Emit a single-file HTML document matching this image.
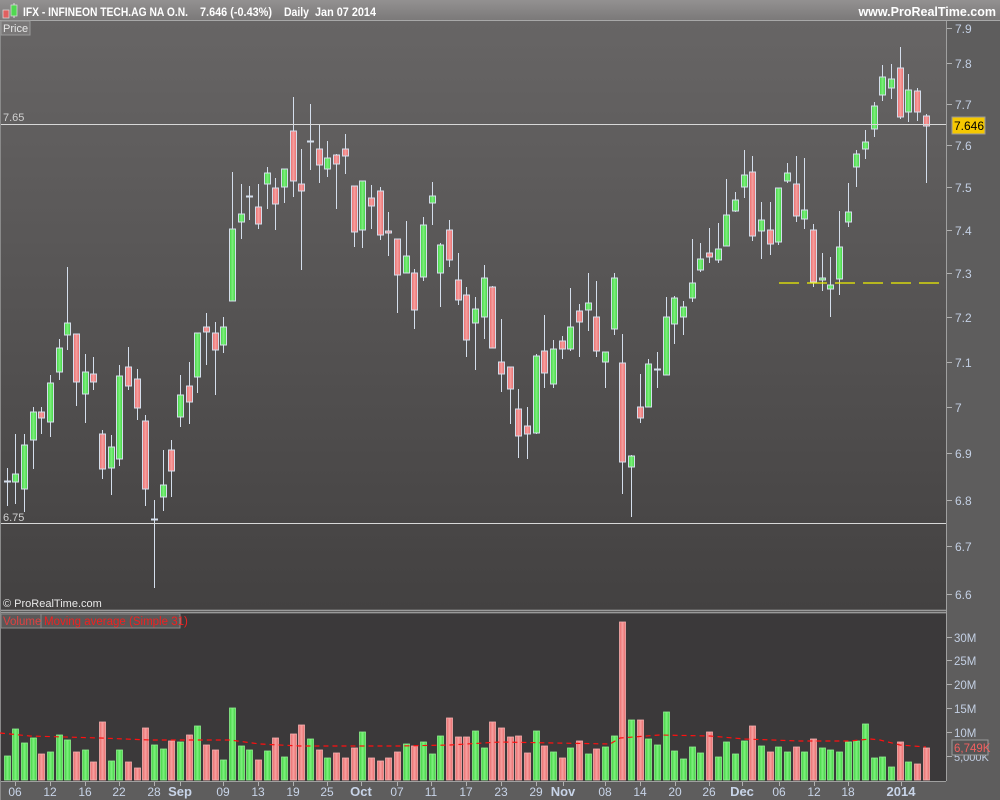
<!DOCTYPE html>
<html><head><meta charset="utf-8"><style>
html,body{margin:0;padding:0;width:1000px;height:800px;overflow:hidden;background:#5e5d5d;font-family:"Liberation Sans",sans-serif}
svg{display:block}
</style></head><body>
<svg id="s" width="1000" height="800" xmlns="http://www.w3.org/2000/svg">
<defs>
<linearGradient id="pbg" x1="0" y1="0" x2="0" y2="1"><stop offset="0" stop-color="#676565"/><stop offset="1" stop-color="#434141"/></linearGradient>
<linearGradient id="hdr" x1="0" y1="0" x2="0" y2="1"><stop offset="0" stop-color="#939191"/><stop offset="1" stop-color="#7b7979"/></linearGradient>
<linearGradient id="gg" x1="0" y1="0" x2="1" y2="0"><stop offset="0" stop-color="#3fd23f"/><stop offset="0.5" stop-color="#7ef07e"/><stop offset="1" stop-color="#3fd23f"/></linearGradient>
<linearGradient id="rg" x1="0" y1="0" x2="1" y2="0"><stop offset="0" stop-color="#e86a6a"/><stop offset="0.5" stop-color="#f7a0a0"/><stop offset="1" stop-color="#e86a6a"/></linearGradient>
</defs>
<rect x="0" y="0" width="1000" height="800" fill="#5e5d5d"/>
<rect x="0" y="0" width="1000" height="20" fill="url(#hdr)"/>
<line x1="0" y1="20.5" x2="1000" y2="20.5" stroke="#a8a8a8"/>
<rect x="1" y="21" width="945" height="588" fill="url(#pbg)"/>
<rect x="1" y="614" width="945" height="167" fill="#3b393a"/>
<line x1="0" y1="610.5" x2="946" y2="610.5" stroke="#9a9a9a"/>
<line x1="0" y1="612.5" x2="946" y2="612.5" stroke="#9a9a9a"/>
<line x1="946.5" y1="21" x2="946.5" y2="781" stroke="#a0a0a0"/>
<line x1="0" y1="781.5" x2="946" y2="781.5" stroke="#a0a0a0"/>
<line x1="0.5" y1="21" x2="0.5" y2="800" stroke="#8a8a8a"/>
<g id="g"></g>
<rect x="3" y="10" width="6" height="8" fill="#e06060" stroke="#ddd" stroke-width="0.7"/>
<line x1="14" y1="3" x2="14" y2="18" stroke="#ddd"/>
<rect x="11" y="5" width="6" height="11" fill="#50d850" stroke="#ddd" stroke-width="0.7"/>
<text x="23" y="16" font-size="12" font-weight="bold" fill="#ffffff" textLength="165" lengthAdjust="spacingAndGlyphs">IFX - INFINEON TECH.AG NA O.N.</text>
<text x="200" y="16" font-size="12" font-weight="bold" fill="#ffffff" textLength="72" lengthAdjust="spacingAndGlyphs">7.646 (-0.43%)</text>
<text x="284" y="16" font-size="12" font-weight="bold" fill="#ffffff" textLength="25" lengthAdjust="spacingAndGlyphs">Daily</text>
<text x="315" y="16" font-size="12" font-weight="bold" fill="#ffffff" textLength="61" lengthAdjust="spacingAndGlyphs">Jan 07 2014</text>
<text x="996" y="16" font-size="12.5" font-weight="bold" fill="#ffffff" text-anchor="end">www.ProRealTime.com</text>
<rect x="1" y="21" width="29" height="14" fill="#7a7878" stroke="#9a9a9a"/>
<text x="3" y="32" font-size="11" fill="#e8e8e8">Price</text>
<line x1="1" y1="124.5" x2="946" y2="124.5" stroke="#d8d8d8"/>
<line x1="1" y1="523.5" x2="946" y2="523.5" stroke="#d8d8d8"/>
<text x="3" y="121" font-size="11" fill="#d0d0d0">7.65</text>
<text x="3" y="521" font-size="11" fill="#d0d0d0">6.75</text>
<line x1="779" y1="283" x2="940" y2="283" stroke="#f0f000" stroke-width="1.3" stroke-dasharray="20,8"/>
<text x="3" y="607" font-size="11" fill="#e8e8e8">© ProRealTime.com</text>
<rect x="952" y="117" width="33" height="17" fill="#f5c800" stroke="#999"/>
<text x="954" y="130" font-size="12" fill="#000">7.646</text>
<rect x="1" y="614" width="40" height="14" fill="#5a5858" stroke="#8a8a8a"/>
<rect x="41" y="614" width="139" height="14" fill="#5a5858" stroke="#8a8a8a"/>
<text x="3" y="625" font-size="11.5" fill="#e04040">Volume</text>
<text x="44" y="625" font-size="11.5" fill="#f02020">Moving average (Simple 31)</text>
<polyline fill="none" stroke="#ff1010" stroke-width="1.2" stroke-dasharray="5,4" points="0,733 30,736 100,738 150,740 230,740 260,744 300,746 400,746 450,745 500,742 610,744 620,738 660,735 710,736 745,739 800,741 850,741 870,739 880,740 900,745 926,747"/>
<text x="954" y="761" font-size="11" fill="#c0cce0">5,000K</text>
<rect x="952" y="740" width="36" height="15" fill="#555" stroke="#9a9a9a"/>
<text x="954" y="752" font-size="11.5" fill="#f06060">6,749K</text>
</svg>
<script>
var NS="http://www.w3.org/2000/svg",g=document.getElementById('g');
function el(t,a,txt){var e=document.createElementNS(NS,t);for(var k in a)e.setAttribute(k,a[k]);if(txt!==undefined)e.textContent=txt;g.appendChild(e);return e;}
var C=[[481,482,468,506,'d'],[474,482,434,504,'g'],[445,489,434,512,'g'],[412,440,407,469,'g'],[412,418,407,434,'r'],[383,422,375,437,'g'],[348,372,339,380,'g'],[323,335,267,350,'g'],[334,382,334,406,'r'],[372,394,354,423,'g'],[374,382,357,390,'r'],[434,469,430,479,'r'],[447,468,435,495,'g'],[376,459,365,466,'g'],[367,386,347,390,'r'],[379,408,369,420,'r'],[421,489,415,506,'r'],[519,520,500,588,'d'],[485,497,450,511,'g'],[450,471,440,497,'r'],[395,417,375,427,'g'],[386,402,362,424,'r'],[333,377,333,393,'g'],[327,332,313,365,'r'],[333,350,322,395,'r'],[327,345,317,353,'g'],[229,301,172,301,'g'],[214,222,184,239,'g'],[196,197,186,220,'d'],[207,224,184,229,'r'],[173,184,167,209,'g'],[188,204,178,230,'r'],[169,187,169,203,'g'],[131,181,97,197,'r'],[184,191,149,270,'r'],[141,142,104,170,'d'],[149,165,125,183,'r'],[158,169,141,177,'g'],[155,164,154,209,'r'],[149,156,134,174,'r'],[186,232,186,247,'r'],[181,230,181,248,'g'],[198,206,185,229,'r'],[191,235,187,240,'r'],[231,233,212,256,'r'],[239,275,239,313,'r'],[256,273,221,273,'g'],[273,310,269,329,'r'],[225,277,217,281,'g'],[196,203,182,225,'g'],[245,273,243,307,'g'],[230,260,220,267,'r'],[280,300,253,305,'r'],[295,340,287,357,'r'],[309,323,297,370,'g'],[278,317,265,339,'g'],[287,348,286,348,'r'],[362,374,319,392,'r'],[367,389,367,424,'r'],[409,436,389,458,'r'],[426,434,407,459,'r'],[356,433,354,434,'g'],[351,373,315,388,'r'],[349,384,340,388,'g'],[341,349,336,359,'r'],[327,349,288,351,'g'],[311,322,304,357,'r'],[303,310,273,331,'g'],[317,351,281,357,'r'],[352,362,352,388,'g'],[278,329,273,335,'g'],[363,462,334,494,'r'],[456,467,455,517,'g'],[407,418,374,423,'r'],[364,407,359,407,'g'],[369,370,352,388,'d'],[317,375,297,375,'g'],[298,324,296,344,'g'],[307,317,301,335,'g'],[283,298,239,302,'g'],[259,270,243,272,'g'],[253,257,228,263,'r'],[249,260,223,263,'g'],[215,246,179,246,'g'],[200,211,192,212,'g'],[175,187,150,198,'g'],[172,236,156,241,'r'],[220,231,202,259,'g'],[230,244,202,255,'r'],[188,242,188,245,'g'],[173,181,163,183,'g'],[184,216,156,222,'r'],[210,219,158,229,'g'],[230,282,224,287,'r'],[278,280,253,291,'g'],[285,289,257,317,'g'],[247,279,211,295,'g'],[212,222,183,227,'g'],[154,167,150,187,'g'],[142,149,130,159,'g'],[106,129,102,137,'g'],[77,95,65,101,'g'],[79,88,64,99,'g'],[68,117,47,119,'r'],[90,112,74,122,'g'],[91,112,88,121,'r'],[116,126,114,183,'r']];
var V=[756,729,743,738,754,752,735,740,752,750,762,722,761,750,762,768,728,745,749,741,742,735,726,745,750,760,708,746,750,760,751,738,757,734,725,739,750,758,753,758,748,732,758,761,758,752,744,746,742,754,736,718,737,737,731,748,722,728,737,736,753,731,746,752,758,748,741,754,749,747,736,622,720,720,739,745,712,751,759,747,753,732,757,742,754,741,726,746,752,747,752,747,752,739,748,750,752,742,741,724,758,757,767,742,762,764,748];
for(var i=0;i<C.length;i++){var c=C[i],x=Math.round(6.7+8.67*i);
 el('line',{x1:x+.5,y1:c[2],x2:x+.5,y2:c[3],stroke:'#d4deec','stroke-width':1});
 if(c[4]=='d'){el('line',{x1:x-3,y1:c[0]+.5,x2:x+4,y2:c[0]+.5,stroke:'#d4deec','stroke-width':2});}
 else el('rect',{x:x-2.5,y:c[0],width:6,height:Math.max(2,c[1]-c[0]),fill:c[4]=='g'?'url(#gg)':'url(#rg)',stroke:'#d4deec','stroke-width':1});
}
for(var i=0;i<V.length;i++){var x=Math.round(6.7+8.67*i),c=C[i]?C[i][4]:'g';if(c=='d')c='g';
 el('rect',{x:x-2.5,y:V[i],width:6,height:780-V[i],fill:c=='g'?'url(#gg)':'url(#rg)',stroke:c=='g'?'#8ff08f':'#f8b0b0','stroke-width':0.8});}
var P=[[7.9,28],[7.8,63],[7.7,104],[7.6,145],[7.5,187],[7.4,230],[7.3,273],[7.2,317],[7.1,362],[7,407],[6.9,453],[6.8,500],[6.7,546],[6.6,594]];
P.forEach(function(p){el('line',{x1:947,y1:p[1]+.5,x2:952,y2:p[1]+.5,stroke:'#b0b0b0'});el('text',{x:955,y:p[1]+5,'font-size':12,fill:'#c4d0e4'},String(p[0]));});
[['30M',637],['25M',660],['20M',684],['15M',708],['10M',732],['',756]].forEach(function(p){el('line',{x1:947,y1:p[1]+.5,x2:952,y2:p[1]+.5,stroke:'#b0b0b0'});if(p[0])el('text',{x:954,y:p[1]+5,'font-size':11.5,fill:'#c4d0e4'},p[0]);});
var D=[['06',15],['12',50],['16',85],['22',119],['28',154],['Sep',180],['09',223],['13',258],['19',293],['25',327],['Oct',361],['07',397],['11',431],['17',466],['23',501],['29',536],['Nov',563],['08',605],['14',640],['20',675],['26',709],['Dec',742],['06',779],['12',814],['18',848],['2014',901]];
D.forEach(function(d){el('line',{x1:d[1]+.5,y1:782,x2:d[1]+.5,y2:786,stroke:'#b0b0b0'});var b=d[0].length>2;el('text',{x:d[1],y:796,'font-size':b?13:12,'font-weight':b?'bold':'normal',fill:'#c8d4e8','text-anchor':'middle'},d[0]);});
</script>
</body></html>
